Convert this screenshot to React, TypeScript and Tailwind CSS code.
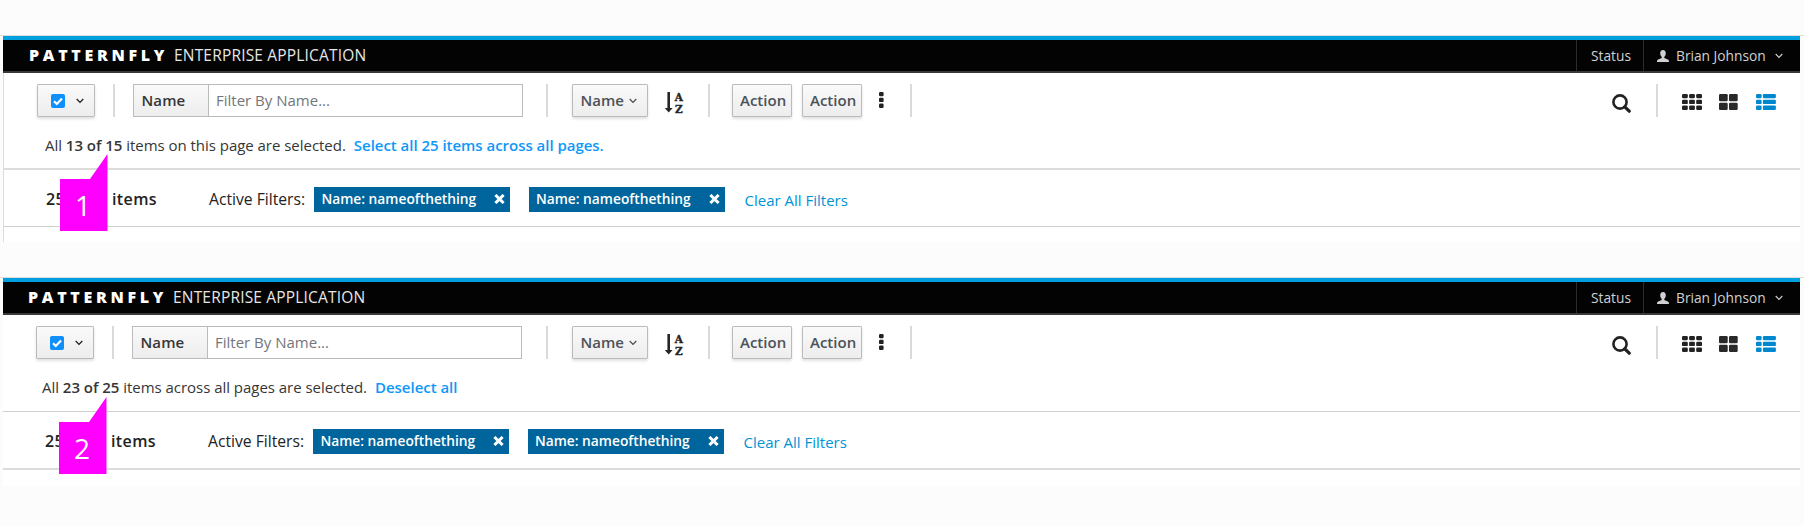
import React from "react";

type PanelProps = {
  shift: boolean;
  summary: React.ReactNode;
  link: string;
  badge: string;
};

function Chevron({ className, w = 1.3 }: { className: string; w?: number }) {
  return (
    <svg className={className} viewBox="0 0 8 6" fill="none" stroke="currentColor" strokeWidth={w}>
      <path d="M0.7 1 L4 4.4 L7.3 1" />
    </svg>
  );
}

function Checkbox() {
  return (
    <svg className="h-[14px] w-[14px]" viewBox="0 0 14 14">
      <rect width="14" height="14" rx="2" fill="#0e8ff9" />
      <path d="M3 7.2 L5.8 9.9 L11 4.5" fill="none" stroke="#fff" strokeWidth="2.2" />
    </svg>
  );
}

function SortIcon() {
  return (
    <svg className="h-7 w-5 text-[#262626]" viewBox="0 0 20 28" fill="currentColor">
      <path d="M2.4 3 h2.6 v16 h2.6 L3.7 23.6 L-0.2 19 h2.6 z" />
      <g stroke="currentColor" strokeWidth="0.4">
        <text x="13.8" y="12" textAnchor="middle" className="font-['DejaVu_Serif'] text-[10.5px] font-bold">A</text>
        <text x="13.8" y="23.9" textAnchor="middle" className="font-['DejaVu_Serif'] text-[10.5px] font-bold">Z</text>
      </g>
    </svg>
  );
}

function UserIcon() {
  return (
    <svg className="h-3 w-3" viewBox="0 0 12 12" fill="currentColor">
      <path d="M6 0 C4.1 0 3.2 1.3 3.2 3.2 C3.2 4.8 3.8 6 4.7 6.7 V8 L1.2 9.4 C0.4 9.8 0 10.4 0 12 H12 C12 10.4 11.6 9.8 10.8 9.4 L7.3 8 V6.7 C8.2 6 8.8 4.8 8.8 3.2 C8.8 1.3 7.9 0 6 0 Z" />
    </svg>
  );
}

function Blocks({ cols, rows, h, gap }: { cols: number[]; rows: number; h: number; gap: number }) {
  const out: React.ReactNode[] = [];
  for (let r = 0; r < rows; r++) {
    let x = 0;
    cols.forEach((w, i) => {
      out.push(<rect key={`${r}-${i}`} x={x} y={r * (h + gap)} width={w} height={h} rx="1.2" />);
      x += w + 1.3;
    });
  }
  return <>{out}</>;
}

function Divider({ className }: { className: string }) {
  return <div className={`h-[33px] w-[2px] shrink-0 bg-[#dadada] ${className}`} />;
}

const button =
  "flex h-[33px] shrink-0 items-center rounded-[1px] border border-[#bbb] bg-gradient-to-b from-[#fafafa] to-[#ededed] shadow-[0_2px_3px_rgba(3,3,3,0.12)]";

function Chip({ className }: { className: string }) {
  return (
    <div className={`flex h-[25px] w-[196px] shrink-0 items-center justify-between bg-[#00659c] pr-[5px] pl-[7.5px] text-white ${className}`}>
      <span className="text-[13.75px] font-semibold whitespace-nowrap">Name: nameofthething</span>
      <svg className="h-[10px] w-[11px]" viewBox="0 0 11 10" stroke="#fff" strokeWidth="3">
        <path d="M1.4 1 L9.6 9 M9.6 1 L1.4 9" />
      </svg>
    </div>
  );
}

function Panel({ shift, summary, link, badge }: PanelProps) {
  return (
    <section className={`relative ml-[3px] w-[1797px] shrink-0 bg-white ${shift ? "h-[208px]" : "h-[206px] shadow-[inset_1px_0_0_#dcdcdc]"}`}>
      <header className={`flex h-[37px] items-stretch border-t-4 border-b-2 border-t-[#00a0df] border-b-[#393939] bg-[#030303] text-white ${shift ? "pl-[25px]" : "pl-[26px]"}`}>
        <div className="flex items-baseline self-center pb-px">
          <span className="w-[145px] text-[16px] font-extrabold tracking-[3.7px]">PATTERNFLY</span>
          <span className="text-[15.5px] tracking-[0.18px] text-[#e6e6e6] whitespace-nowrap">ENTERPRISE APPLICATION</span>
        </div>
        <div className="ml-auto flex text-[13.75px] text-[#d1d1d1]">
          <div className="flex w-[67px] items-center border-l border-[#2b2b2b] pt-px pl-[14px]">Status</div>
          <div className="flex w-[157px] items-center border-l border-[#2b2b2b] pt-px pl-[13px]">
            <UserIcon />
            <span className="ml-[7px] w-[99px] whitespace-nowrap">Brian Johnson</span>
            <Chevron className="h-[6px] w-[8px]" w={1.1} />
          </div>
        </div>
      </header>

      <div className={`flex h-[44px] pt-[11px] text-[15px] text-[#363636] ${shift ? "pl-[33px]" : "pl-[34px]"}`}>
        <div className={`${button} w-[58px] pl-[13px]`}>
          <Checkbox />
          <Chevron className="ml-[11px] h-[6px] w-[8px] text-[#222]" />
        </div>
        <Divider className="ml-[18px]" />
        <div className="ml-[18px] flex h-[33px] w-[390px] shrink-0 border border-[#bbb]">
          <div className="flex w-[75px] items-center border-r border-[#bbb] bg-gradient-to-b from-[#fafafa] to-[#ededed] pb-px pl-[7.5px] font-semibold tracking-[0.1px]">Name</div>
          <div className="flex items-center pb-px pl-[7px] text-[#72767b]">Filter By Name...</div>
        </div>
        <Divider className={shift ? "ml-[24px]" : "ml-[23px]"} />
        <div className={`${button} ml-[24px] w-[76px] pb-px pl-[7.5px] font-semibold text-[#4d5258]`}>
          Name
          <Chevron className="mt-px ml-[5px] h-[6px] w-[8px]" />
        </div>
        <div className="ml-[17px] pt-[5px]"><SortIcon /></div>
        <Divider className="ml-[23px]" />
        <div className={`${button} ml-[22px] w-[60px] pb-px pl-[7px] font-semibold text-[#4d5258]`}>Action</div>
        <div className={`${button} ml-[10px] w-[60px] pb-px pl-[7px] font-semibold text-[#4d5258]`}>Action</div>
        <svg className="mt-[8px] ml-[17px] h-4 w-[5px]" viewBox="0 0 5 16" fill="#222">
          <Blocks cols={[4.6]} rows={3} h={4.3} gap={1.5} />
        </svg>
        <Divider className="ml-[26px]" />
        <div className="ml-auto flex pr-[24px]">
          <svg className="mt-[10px] h-[19px] w-[19px]" viewBox="0 0 19 19" fill="none" stroke="#222">
            <circle cx="8" cy="8" r="6.6" strokeWidth="2.6" />
            <path d="M12.8 12.8 L17.2 17.2" strokeWidth="3.2" strokeLinecap="round" />
          </svg>
          <Divider className="ml-[25px]" />
          <svg className="mt-[10px] ml-[24px] h-4 w-5" viewBox="0 0 20 16" fill="#222">
            <Blocks cols={[5.8, 5.8, 5.8]} rows={3} h={4.3} gap={1.5} />
          </svg>
          <svg className="mt-[10px] ml-[17.5px] h-4 w-[19px]" viewBox="0 0 19 16" fill="#292929">
            <Blocks cols={[8.7, 8.7]} rows={2} h={7.3} gap={1.4} />
          </svg>
          <svg className="mt-[10px] ml-[18px] h-4 w-5" viewBox="0 0 20 16" fill="#0088ce">
            <Blocks cols={[5.6, 13]} rows={3} h={4.3} gap={1.5} />
          </svg>
        </div>
      </div>

      <div className={`flex h-[53px] items-center pt-[5px] text-[15px] tracking-[-0.03px] whitespace-nowrap text-[#363636] ${shift ? "border-b border-[#cfcfcf] pl-[39px]" : "border-b-2 border-[#dcdcdc] pl-[42px]"}`}>
        <span>{summary}</span>
        <span className="ml-[8px] font-semibold text-[#0e98f9]">{link}</span>
      </div>

      <div className={`flex items-center text-[15.7px] whitespace-nowrap text-[#222] ${shift ? "h-[58px] border-b-2 border-[#dcdcdc] pt-[2px] pl-[42px]" : "h-[57px] border-b border-[#cfcfcf] pt-[2px] pl-[43px]"}`}>
        <div className="flex w-[163px] text-[16px] font-semibold tracking-[0.4px]">
          <span className="w-[66px]">25</span>
          <span>items</span>
        </div>
        <span className="w-[105px] pt-px">Active Filters:</span>
        <Chip className="" />
        <Chip className="ml-[18.5px]" />
        <span className="ml-[20px] pt-[3px] text-[15px] text-[#0094d6]">Clear All Filters</span>
      </div>

      <div className={`absolute h-[77px] w-[48px] ${shift ? "top-[119px] left-[56px]" : "top-[118px] left-[57px]"}`}>
        <svg className="absolute inset-0 h-[77px] w-[48px]" viewBox="0 0 48 77" fill="#ff00ff">
          <path d="M0 25 H30 L47.5 0 V77 H0 Z" />
        </svg>
        <span className="absolute top-[31px] left-[15px] text-[28px] leading-[40px] text-white">{badge}</span>
      </div>
    </section>
  );
}

export default function App() {
  return (
    <main className="flex h-[526px] w-[1804px] flex-col overflow-hidden bg-[#fcfcfc] pt-[35px] font-['Open_Sans',sans-serif]">
      <div className="h-px shrink-0 bg-[#dcdcdc]" />
      <Panel
        shift={false}
        badge="1"
        summary={<>All <b className="font-semibold">13 of 15</b> items on this page are selected.</>}
        link="Select all 25 items across all pages."
      />
      <div className="mt-[35px] h-px shrink-0 bg-[#dcdcdc]" />
      <Panel
        shift={true}
        badge="2"
        summary={<>All <b className="font-semibold">23 of 25</b> items across all pages are selected.</>}
        link="Deselect all"
      />
    </main>
  );
}
